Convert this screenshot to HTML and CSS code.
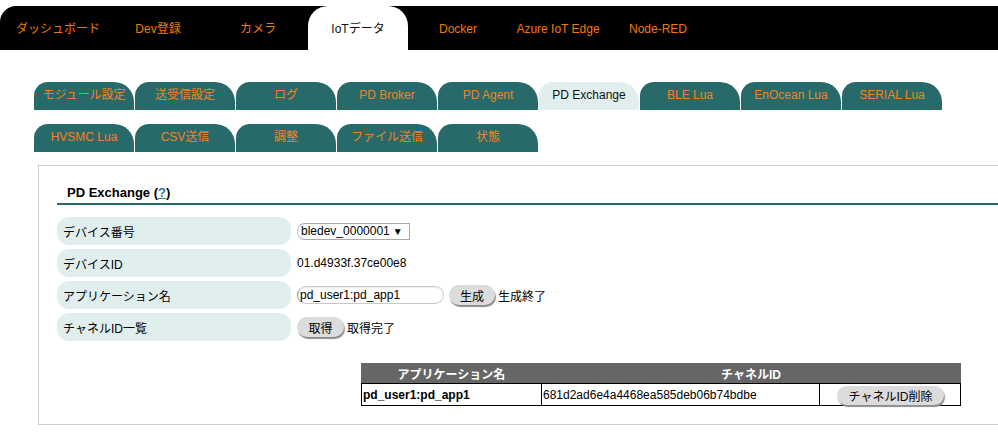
FILE: index.html
```html
<!DOCTYPE html>
<html lang="ja">
<head>
<meta charset="utf-8">
<title>PD Exchange</title>
<link rel="stylesheet" href="styles.css">
</head>
<body>
<nav class="topnav">
  <a class="nav-item">ダッシュボード</a>
  <a class="nav-item">Dev登録</a>
  <a class="nav-item">カメラ</a>
  <a class="nav-item active">IoTデータ</a>
  <a class="nav-item">Docker</a>
  <a class="nav-item">Azure IoT Edge</a>
  <a class="nav-item">Node-RED</a>
</nav>

<div class="subtabs">
  <div class="tab-row">
    <a class="tab">モジュール設定</a>
    <a class="tab">送受信設定</a>
    <a class="tab">ログ</a>
    <a class="tab">PD Broker</a>
    <a class="tab">PD Agent</a>
    <a class="tab active">PD Exchange</a>
    <a class="tab">BLE Lua</a>
    <a class="tab">EnOcean Lua</a>
    <a class="tab">SERIAL Lua</a>
  </div>
  <div class="tab-row">
    <a class="tab">HVSMC Lua</a>
    <a class="tab">CSV送信</a>
    <a class="tab">調整</a>
    <a class="tab">ファイル送信</a>
    <a class="tab">状態</a>
  </div>
</div>

<section class="panel">
  <h2 class="panel-title">PD Exchange (<a class="help">?</a>)</h2>
  <div class="form">
    <div class="form-row">
      <div class="label">デバイス番号</div>
      <div class="value"><span class="select">bledev_0000001 <span class="arrow">▼</span></span></div>
    </div>
    <div class="form-row">
      <div class="label">デバイスID</div>
      <div class="value">01.d4933f.37ce00e8</div>
    </div>
    <div class="form-row">
      <div class="label">アプリケーション名</div>
      <div class="value"><span class="input">pd_user1:pd_app1</span><span class="btn btn-gen">生成</span><span class="status">生成終了</span></div>
    </div>
    <div class="form-row">
      <div class="label">チャネルID一覧</div>
      <div class="value"><span class="btn btn-get">取得</span><span class="status">取得完了</span></div>
    </div>
  </div>

  <table class="channels">
    <thead>
      <tr><th class="col-app">アプリケーション名</th><th colspan="2">チャネルID</th></tr>
    </thead>
    <tbody>
      <tr>
        <td class="col-app app-name">pd_user1:pd_app1</td>
        <td class="col-id">681d2ad6e4a4468ea585deb06b74bdbe</td>
        <td class="col-btn"><span class="btn btn-del">チャネルID削除</span></td>
      </tr>
    </tbody>
  </table>
</section>
</body>
</html>
```

FILE: styles.css
```css
html, body {
  margin: 0;
  padding: 0;
  overflow: hidden;
  background: #fff;
  font-family: "Liberation Sans", Arial, "Noto Sans CJK JP", sans-serif;
  font-size: 12px;
  color: #000;
}

.topnav {
  margin-top: 6px;
  height: 44px;
  background: #000;
  border-top-left-radius: 16px;
  display: flex;
  padding-left: 8px;
}

.nav-item {
  width: 100px;
  text-align: center;
  line-height: 46px;
  color: #f27a00;
  font-size: 12px;
}

.nav-item.active {
  background: #fff;
  color: #111;
  border-radius: 20px 20px 0 0;
}

.subtabs {
  margin-top: 32px;
  margin-left: 34px;
  display: flex;
  flex-direction: column;
  gap: 14px;
}

.tab-row {
  display: flex;
  gap: 1px;
}

.tab {
  width: 100px;
  height: 28px;
  line-height: 27px;
  text-align: center;
  background: #276a69;
  color: #f5821f;
  border-radius: 14px 20px 0 0;
}

.tab.active {
  background: #e0eeee;
  color: #111;
}

.panel {
  margin-top: 13px;
  margin-left: 38px;
  border: 1px solid #cfcfcf;
  border-right: none;
  padding: 0 0 18px 18px;
}

.panel-title {
  margin: 19px 0 0 0;
  padding: 0 0 2px 10px;
  font-size: 13px;
  line-height: 16px;
  font-weight: bold;
  border-bottom: 2px solid #276a69;
}

.help {
  color: #2a7a8a;
  text-decoration: underline;
}

.form {
  margin-top: 12px;
  display: flex;
  flex-direction: column;
  gap: 4px;
}

.form-row {
  display: flex;
  align-items: center;
}

.label {
  width: 228px;
  height: 28px;
  padding-left: 6px;
  display: flex;
  align-items: center;
  background: #e0eeee;
  border-radius: 12px;
}

.value {
  margin-left: 6px;
  display: flex;
  align-items: center;
}

.select {
  display: inline-flex;
  align-items: center;
  height: 15px;
  padding: 0 6px 0 3px;
  border: 1px solid #a9a9a9;
  border-left-color: #c4c4c4;
  border-radius: 8px 0 0 8px;
  line-height: 15px;
}

.arrow {
  font-size: 10px;
  margin-left: 3px;
}

.input {
  display: inline-block;
  width: 143px;
  height: 16px;
  line-height: 16px;
  padding-left: 2px;
  border: 1px solid #c8c8c8;
  border-left-color: #999;
  border-radius: 9px;
  box-shadow: inset 1px 1px 1px #eee;
}

.btn {
  display: inline-flex;
  align-items: center;
  justify-content: center;
  height: 20px;
  background: #dcdcdc;
  border-radius: 10px;
  box-shadow: 1px 2px 1px #8c8c8c;
}

.btn-gen {
  width: 46px;
  margin-left: 5px;
}

.btn-get {
  width: 47px;
}

.status {
  margin-left: 3px;
}

.channels {
  margin-top: 22px;
  margin-left: 304px;
  width: 600px;
  border-collapse: collapse;
}

.channels th {
  background: #666;
  color: #fff;
  font-weight: bold;
  height: 19px;
  padding: 0;
  text-align: center;
  border: 1px solid #666;
  border-bottom: 1px solid #000;
}

.channels td {
  border: 1px solid #000;
  height: 21px;
  padding: 0 0 0 1px;
}

.col-app { width: 178px; }
.app-name { font-weight: bold; }
.col-id { width: 276px; }
.col-btn { text-align: center; }

.btn-del {
  width: 107px;
  height: 19px;
  margin-top: 1px;
}
```
